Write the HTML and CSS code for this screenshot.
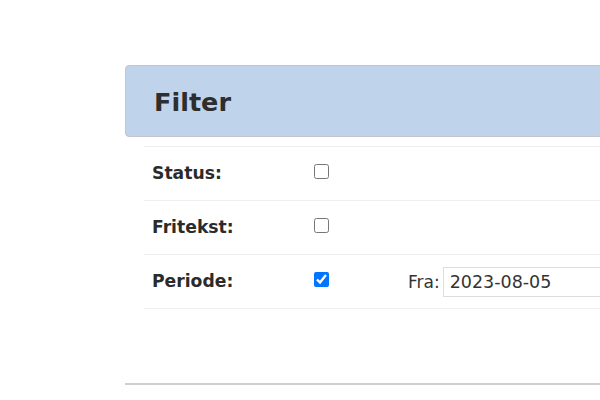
FILE: index.html
```html
<!DOCTYPE html>
<html lang="no">
<head>
<meta charset="utf-8">
<title>Filter</title>
<link rel="stylesheet" href="styles.css">
</head>
<body>
<div class="page">
  <div class="panel">
    <div class="panel-head"><h1 class="title">Filter</h1></div>
    <div class="table">
      <div class="row">
        <div class="cell label">Status:</div>
        <div class="cell"><input type="checkbox" class="check"></div>
        <div class="cell"></div>
      </div>
      <div class="row">
        <div class="cell label">Fritekst:</div>
        <div class="cell"><input type="checkbox" class="check"></div>
        <div class="cell"></div>
      </div>
      <div class="row">
        <div class="cell label">Periode:</div>
        <div class="cell"><input type="checkbox" class="check" checked></div>
        <div class="cell"><span class="fra">Fra:</span><input type="text" class="date" value="2023-08-05"></div>
      </div>
    </div>
    <div class="footer-line"></div>
  </div>
</div>
</body>
</html>
```
FILE: styles.css
```css
html, body {
  margin: 0;
  overflow: hidden;
  background: #fff;
}
body {
  font-family: "DejaVu Sans", Verdana, sans-serif;
  font-size: 17px;
  color: #333;
}
.page {
  padding: 65px 0 0 125px;
}
.panel {
  width: 640px;
}
.panel-head {
  background: #bfd3ea;
  border: 1px solid #c3c6ca;
  border-radius: 4px;
  height: 70px;
  display: flex;
  align-items: center;
  padding-left: 28px;
}
.title {
  margin: 0;
  font-size: 25.5px;
  font-weight: bold;
  color: #2e2e2e;
  padding-top: 2px;
}
.table {
  margin: 9px 0 0 19px;
  border-bottom: 1px solid #eee;
}
.row {
  display: grid;
  grid-template-columns: 159px 97px 1fr;
  height: 53px;
  border-top: 1px solid #eee;
  align-items: center;
}
.cell {
  padding: 0 8px;
  display: flex;
  align-items: center;
}
.label {
  font-weight: bold;
  font-size: 17.2px;
  color: #2b2b2b;
  padding-bottom: 2px;
}
.check {
  width: 15px;
  height: 15px;
  margin: 0 0 5px 3px;
}
.fra {
  margin-right: 3px;
}
.date {
  font-family: "DejaVu Sans", Verdana, sans-serif;
  font-size: 17.5px;
  color: #333;
  border: 1px solid #ddd;
  height: 30px;
  box-sizing: border-box;
  padding: 0 6px;
  width: 300px;
  outline: none;
}
.footer-line {
  margin-top: 74px;
  height: 2px;
  background: #cfcfcf;
}
```
